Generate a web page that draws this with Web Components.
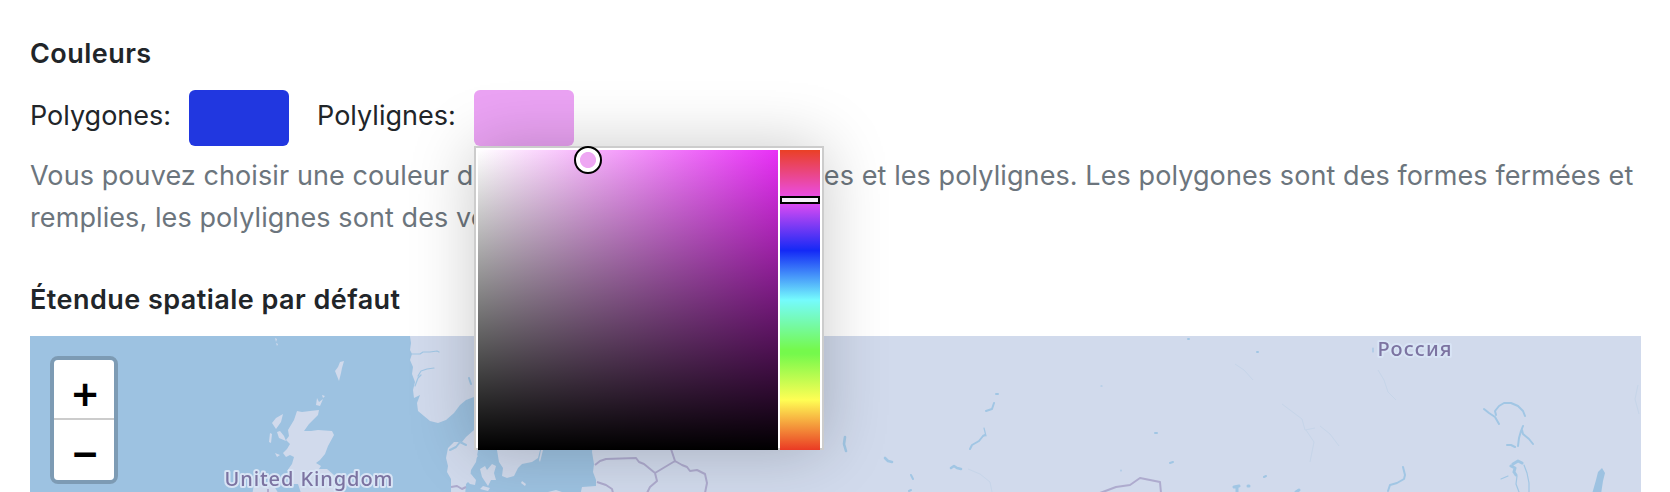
<!DOCTYPE html>
<html lang="fr">
<head>
<meta charset="utf-8">
<title>Couleurs</title>
<style>
html, body { margin: 0; background: #fff; height: 492px; overflow: hidden; }
body { font: 400 27px/42px Inter, "Liberation Sans", sans-serif; color: #212529; }
</style>
</head>
<body>
<settings-page></settings-page>

<template id="t-page">
  <style>
    :host { display: block; padding: 33px 29px 0 30px; }
    .row { display: flex; align-items: center; height: 56px; margin-top: 15px; }
    color-field + color-field { margin-left: 28px; }
    p { margin: 9px 0 0; color: #6c757d; letter-spacing: .09px; white-space: nowrap; }
    .gap { word-spacing: 7px; }
    .extent { margin-top: 40px; }
    map-view { margin-top: 15px; }
  </style>
  <section-title>Couleurs</section-title>
  <div class="row">
    <color-field color="#2137e0">Polygones:</color-field>
    <color-field color="#eba3f4" open>Polylignes:</color-field>
  </div>
  <p>Vous pouvez choisir une couleur <span class="gap">différente pour les polygon</span>es et les polylignes. Les polygones sont des formes fermées et<br>remplies, les polylignes sont des vecteurs ouverts.</p>
  <section-title class="extent">Étendue spatiale par défaut</section-title>
  <map-view></map-view>
</template>

<template id="t-title">
  <style>
    :host { display: block; height: 42px; font-weight: 630; letter-spacing: .46px; }
  </style>
  <slot></slot>
</template>

<template id="t-field">
  <style>
    :host { display: flex; align-items: center; position: relative; }
    .swatch { width: 100px; height: 56px; border-radius: 6px; margin-left: 18px; background: var(--c); }
    label { height: 46px; line-height: 42px; }
    color-picker { position: absolute; right: -250px; top: 56px; z-index: 5; }
  </style>
  <label><slot></slot></label>
  <div class="swatch"></div>
</template>

<template id="t-picker">
  <style>
    :host { display: block; box-sizing: border-box; width: 350px; height: 304px; padding: 2px;
      background: #fff; border: 2px solid #ccc; box-shadow: 0 0 60px rgba(0,0,0,.21); }
    .in { display: flex; gap: 2px; }
    .sv { position: relative; width: 300px; height: 300px;
      background: linear-gradient(to bottom, rgba(0,0,0,0), #000), linear-gradient(to right, #fff, #e82ff6); }
    .hue { position: relative; width: 40px; height: 300px;
      background: linear-gradient(to bottom, #ea4025 0, #ea4df2 16.67%, #1429f6 33.5%, #75fbfd 50%, #75f94c 66.67%, #75f94c 68%, #fffe54 83.33%, #ea3a24 100%); }
    .dot { position: absolute; box-sizing: border-box; left: 96px; top: -4px; width: 28px; height: 28px;
      border: 2px solid #000; border-radius: 50%; background: radial-gradient(circle, #eea7f3 7.6px, #fff 8.4px); }
    .bar { position: absolute; box-sizing: border-box; left: 0; top: 46px; width: 40px; height: 8px; border: 2px solid #000; background: #f6f0fb; }
  </style>
  <div class="in"><div class="sv"><div class="dot"></div></div><div class="hue"><div class="bar"></div></div></div>
</template>

<template id="t-zoom">
  <style>
    :host { display: block; border: 4px solid rgba(0,0,0,.2); border-radius: 8px; width: 60px; height: 120px; }
    .b { box-sizing: border-box; display: block; height: 60px; background: #fff; color: #000; text-align: center;
      font: 500 46px/62px Inter, sans-serif; padding-left: 2px; }
    .b:first-of-type { border-bottom: 2px solid #ccc; border-radius: 4px 4px 0 0; }
    .b:last-of-type { border-radius: 0 0 4px 4px; }
  </style>
  <span class="b">+</span><span class="b">−</span>
</template>

<template id="t-map">
  <style>
    :host { display: block; position: relative; height: 156px; background: #9dc2e1; }
    .view { display: block; width: 1611px; height: 156px; overflow: visible; }
    .clip { overflow: hidden; }
    .tiles { filter: blur(.6px); }
    .land { fill: #d1daec; }
    .sea { fill: #9dc2e1; }
    .lake { fill: none; stroke: #a1c6e4; stroke-linecap: round; stroke-linejoin: round; }
    .faint { fill: none; stroke: #c6d5e9; stroke-width: 1; }
    .border { fill: none; stroke: #aeabce; stroke-width: 2; stroke-linejoin: round; }
    text { font: 500 20px "Noto Sans", sans-serif; fill: #7c73a1; stroke: #d8e4f5; stroke-width: 4px; stroke-linejoin: round; paint-order: stroke; filter: blur(.35px); }
    zoom-control { position: absolute; left: 20px; top: 20px; }
  </style>
  <svg class="view" viewBox="30 336 1611 156">
    <svg class="clip" x="30" y="336" width="1611" height="156" viewBox="30 336 1611 156">
    <g class="tiles">
    <g class="land">
      <path d="M409 330 411 343 410 350 412 354 410 360 413 367 412 374 415 382 413 390 414 398 420 395 417 403 418 411 424 416 430 421 438 423 446 420 454 413 460 405 466 400 474 397 560 330z"/>
      <path d="M474 430 466 437 462 442 454 442 448 448 446 458 448 466 447 472 451 479 451 496 465 496 466 484 470 480 471 470 476 462 478 450z"/>
      <path d="M466 475 471 474 476 480 475 485 470 484 466 480zM480 469 485 466 487 470 492 464 496 466 494 473 496 480 491 480 488 486 482 477zM522 481 526 484 525 486 521 483zM473 452 478 456 475 459zM483 486 490 488 488 491 480 489z"/>
      <path d="M497 450 499 462 503 468 502 476 507 478 514 476 518 468 522 464 532 462 538 458 540 450zM543 450 540 462 539 460 541 450z"/>
      <path d="M593 440 592 452 594 464 593 472 596 480 596 486 582 487 580 496 1645 496 1645 330 800 330 700 440z"/>
      <path d="M548 492 556 490 562 492z"/>
      <path d="M297 411 302 412 310 411 319 410 318 415 309 424 304 431 311 431 318 430 332 431 334 435 328 446 325 454 320 460 316 463 321 466 319 469 327 469 334 475 340 496 302 496 298 484 289 484 291 477 293 472 287 471 292 464 294 457 290 455 286 457 283 453 287 449 290 444 286 440 289 436 288 430 291 425 294 420z"/>
      <path d="M283 414 281 422 276 429 272 423 276 418zM277 432 280 431 284 436 286 441 279 438zM270 433 272 434 271 443 269 442zM275 453 280 455 277 457zM317 398 319 402 323 399 320 406 316 405zM322 395 325 396 323 398zM344 361 342 368 341 373 339 381 337 376 335 371 338 367 340 362zM275 338 277 339 276 342zM276 343 278 344 277 346zM296 460 299 466 292 471z"/>
      <path d="M254 484 262 482 274 486 280 496 252 496z"/>
    </g>
    <g class="lake">
      <path stroke-width="1.2" d="M412 354h8l3-2h7l7-1 2 1M418 376l3-5 6-2 7-1M415 386l3-8 3-3"/>
      <path stroke-width="2" d="M450 450l6-3 4-5 6 3M469 378l2 6"/>
      <path stroke-width="2.6" d="M845 437l-1 7 2 7M885 458l3 3 4 1M951 468l3-2 3 2 4 1"/>
      <path stroke-width="2" d="M911 475l2 4M909 491l2-1M986 411l6-2 2-6M996 394l2 0M970 449l2-4 7-4 4-5 2-1M1155 433l2 0M1170 463l3-1M1188 339h1"/>
      <path stroke-width="1.2" d="M984 428l2 8M1101 386h1M1121 470v1M1373 348v4"/>
      <path stroke-width="2" d="M1257 352h1M1264 477l2-1M1388 491l2-6 7-2 7-4 1-4-2-8M1484 409l5 4 6 4 4 7M1496 415l-1-4 4-5 5-3 7 0 7 3 5 5 2 5M1523 426l-2 5-2 7-1 8M1522 430l1 4 6 5 4 5M1507 445l4 0 4 2"/>
      <path stroke-width="3" d="M1511 466l4 2-1 4M1513 464l5-3 4 2M1514 472l2 3M1234 487l5-1M1237 487v6M1296 492l3-2M1248 486h1"/>
      <path stroke-width="1.2" d="M1524 465l3 8 2 10 0 9M1517 476l-1 8 3 8M1501 479l7-3"/>
    </g>
    <path class="sea" d="M1592 494 1596 480 1598 472 1602 468 1605 473 1603 481 1601 494z"/>
    <g class="faint">
      <path d="M1235 364l9 6 9 10M1378 370l6 10 4 12 8 8M1282 404l12 9 8 6 3 11 10-2M1320 426l10 8 9 12M1306 430l8 12-4 20M1638 385l-3 14 4 15M968 469l12 5 10 8 2 10"/>
    </g>
    <g class="border">
      <path d="M595 465 600 461 606 459 636 458 639 462 644 464 655 473 657 481 650 487 647 493M655 473 665 467 675 461 671 449M675 461 682 465 687 467 690 471 697 470 705 474 707 483 705 493M597 482 606 485 612 489 613 493M1100 493 1116 487 1130 485 1140 478 1160 482 1161 493M451 487 457 486 462 489 466 487M268 493v-4"/>
    </g>
    </g>
    </svg>
    <text x="224.5" y="486" textLength="168">United Kingdom</text>
    <text x="1377.5" y="356" textLength="74">Россия</text>
  </svg>
  <zoom-control></zoom-control>
</template>

<script>
const define = (name, id, setup) => customElements.define(name, class extends HTMLElement {
  constructor() {
    super();
    this.attachShadow({ mode: 'open' }).append(document.getElementById(id).content.cloneNode(true));
  }
  connectedCallback() { if (setup) setup(this); }
});
define('section-title', 't-title');
define('color-picker', 't-picker');
define('zoom-control', 't-zoom');
define('map-view', 't-map');
define('color-field', 't-field', el => {
  el.style.setProperty('--c', el.getAttribute('color'));
  if (el.hasAttribute('open')) el.shadowRoot.append(document.createElement('color-picker'));
});
define('settings-page', 't-page');
</script>
</body>
</html>
